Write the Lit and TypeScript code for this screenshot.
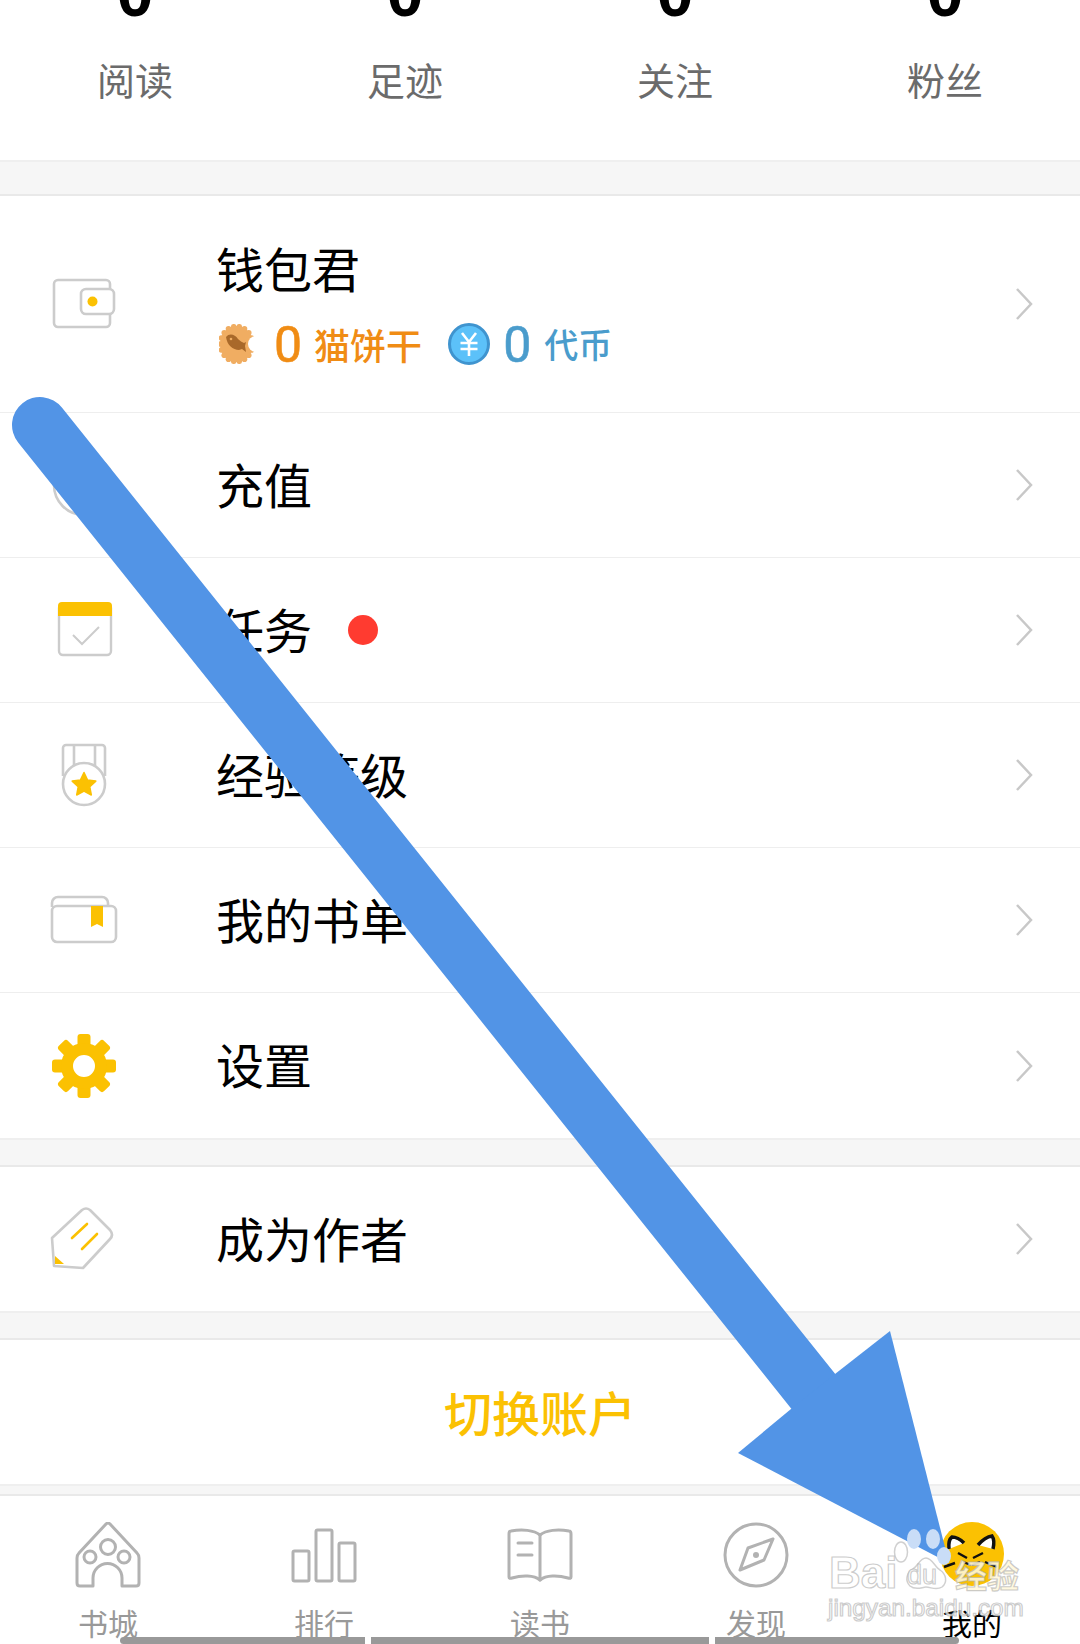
import { html, svg, css, LitElement, nothing } from 'lit';
import { customElement } from 'lit/decorators.js';

const GRAY = '#cccccc';
const YELLOW = '#fbc102';

const stats = ['阅读', '足迹', '关注', '粉丝'];

const walletIcon = html`<svg class="icon" viewBox="0 0 64 64" fill="none" stroke=${GRAY} stroke-width="2.6">
  <rect x="2" y="8" width="56" height="47" rx="4"></rect>
  <rect x="29" y="17" width="33" height="25" rx="5" fill="#fff"></rect>
  <circle cx="40.500" cy="29.500" r="5" fill=${YELLOW} stroke="none"></circle>
</svg>`;

const rechargeIcon = html`<svg class="icon" viewBox="0 0 64 64" fill="none" stroke=${GRAY} stroke-width="2.6">
  <circle cx="32" cy="32" r="30"></circle>
</svg>`;

const taskIcon = html`<svg class="icon" viewBox="0 0 64 64" fill="none" stroke=${GRAY} stroke-width="2.4">
  <rect x="7" y="6" width="52" height="51" rx="4"></rect>
  <path d="M6 18V8a4 4 0 0 1 4-4h46a4 4 0 0 1 4 4v10z" fill=${YELLOW} stroke="none"></path>
  <path d="M21 37l9 9 17-17" stroke-width="2"></path>
</svg>`;

const medalIcon = html`<svg class="icon" viewBox="0 0 64 64" fill="none" stroke=${GRAY} stroke-width="2.6">
  <path d="M11 33V5a3 3 0 0 1 3-3h36a3 3 0 0 1 3 3v28"></path>
  <path d="M22 2v24M43 2v24"></path>
  <circle cx="32" cy="41" r="21" fill="#fff"></circle>
  <path d="M32 29.500l3.600 7.600 8.200 1-6 5.700 1.500 8.200-7.300-4-7.300 4 1.500-8.200-6-5.700 8.200-1z" fill=${YELLOW} stroke=${YELLOW} stroke-width="1.500" stroke-linejoin="round"></path>
</svg>`;

const listIcon = html`<svg class="icon" viewBox="0 0 64 64" fill="none" stroke=${GRAY} stroke-width="2.6">
  <path d="M0 19v-4a6 6 0 0 1 6-6h44a6 6 0 0 1 6 6v3"></path>
  <rect x="0" y="18" width="64" height="36" rx="5" fill="#fff"></rect>
  <path d="M39 18h12v21l-6-3-6 3z" fill=${YELLOW} stroke="none"></path>
</svg>`;

// the gear is drawn with svg`` so the mapped teeth stay in the svg namespace
const gearTeeth = [0, 45, 90, 135, 180, 225, 270, 315].map(
  (a) => svg`<rect x="25.500" y="0" width="13" height="20" rx="3" transform="rotate(${a} 32 32)"></rect>`,
);

const gearIcon = html`<svg class="icon" viewBox="0 0 64 64" fill=${YELLOW}>
  ${gearTeeth}
  <circle cx="32" cy="32" r="17" fill="none" stroke=${YELLOW} stroke-width="12"></circle>
</svg>`;

const authorIcon = html`<svg class="icon" viewBox="0 0 64 64" fill="none" stroke=${GRAY} stroke-width="2.6" stroke-linejoin="round">
  <path d="M0 31L30 3q4-3 8 0l20 20q4 5 0 9L31 61 2 59z"></path>
  <path d="M3 49l9 8H3z" fill=${YELLOW} stroke="none"></path>
  <path d="M20 31l15-14M30 42l15-15" stroke=${YELLOW} stroke-linecap="round"></path>
</svg>`;

const chevron = html`<svg class="chevron" viewBox="0 0 18 34" fill="none" stroke="#c8c8c8" stroke-width="2.500">
  <path d="M2 2l14 15L2 32"></path>
</svg>`;

const scallops = Array.from({ length: 18 }, (_, i) => {
  const a = (i / 18) * Math.PI * 2;
  return svg`<circle cx=${17.500 + Math.cos(a) * 16} cy=${20 + Math.sin(a) * 17.500} r="2.800"></circle>`;
});

const cookie = html`<svg class="coin" viewBox="0 0 40 40">
  <g fill="#f0ad62">
    ${scallops}
    <ellipse cx="17.500" cy="20" rx="16.500" ry="18"></ellipse>
  </g>
  <circle cx="37" cy="20" r="8" fill="#fff"></circle>
  <path d="M7 13c3-4 9-3 12 2 2 2 4 3 6 4l2-1-1 4 1 6-4-3-3 1c-6 0-12-5-13-13z" fill="#a9692a"></path>
  <circle cx="12" cy="15" r="1.300" fill="#f0ad62"></circle>
</svg>`;

const yuan = html`<svg class="coin" viewBox="0 0 42 42">
  <circle cx="21" cy="21" r="19.500" fill="#5cc1f9" stroke="#3f94cf" stroke-width="3"></circle>
  <path d="M14 10l7 9 7-9M12.500 20h17M12.500 26h17M21 19v14" fill="none" stroke="#fff" stroke-width="2.600"></path>
</svg>`;

const houseIcon = html`<svg viewBox="0 0 66 66" fill="none" stroke="#b2b2b2" stroke-width="3" stroke-linejoin="round">
  <path d="M2 36q0-3 2-5L31 2q2-2 4 0l27 29q2 2 2 5v25q0 3-3 3H47v-8a14.500 14.500 0 0 0-29 0v8H5q-3 0-3-3z"></path>
  <circle cx="33" cy="25" r="7.500"></circle>
  <circle cx="15" cy="35" r="6"></circle>
  <circle cx="49" cy="35" r="6"></circle>
</svg>`;

const barsIcon = html`<svg viewBox="0 0 66 66" fill="none" stroke="#b2b2b2" stroke-width="3">
  <rect x="2" y="29" width="16" height="30" rx="1.500"></rect>
  <rect x="25" y="8" width="16" height="51" rx="1.500"></rect>
  <rect x="48" y="21" width="16" height="38" rx="1.500"></rect>
</svg>`;

const bookIcon = html`<svg viewBox="0 0 66 66" fill="none" stroke="#b2b2b2" stroke-width="3" stroke-linejoin="round" stroke-linecap="round">
  <path d="M33 13C27 8 15 7 4 9q-2 0-2 3v43q0 2 3 1c10-3 22-3 28 2 6-5 18-5 28-2q3 1 3-1V12q0-3-2-3C51 7 39 8 33 13z"></path>
  <path d="M33 13v45M11 21h14M11 33h14"></path>
</svg>`;

const compassIcon = html`<svg viewBox="0 0 66 66" fill="none" stroke="#b2b2b2" stroke-width="3" stroke-linejoin="round">
  <circle cx="33" cy="33" r="31"></circle>
  <path d="M50 17L25 26 17 48l24-10z"></path>
  <circle cx="33" cy="33" r="3" fill="#b2b2b2" stroke="none"></circle>
</svg>`;

const catIcon = html`<svg viewBox="0 0 66 66">
  <circle cx="33" cy="32" r="32" fill=${YELLOW}></circle>
  <path d="M10 27l2-12 13 6zM54 27l-1-13-14 9z" fill="#fff"></path>
  <path d="M10 27q-1-9 3-12 6 0 12 6M39 23q7-8 14-9 3 4 1 13" fill="none" stroke="#111" stroke-width="3.500"></path>
  <path d="M19 31l9 5M44 31l-10 5M5 45l11-4M58 45l-12-5M24 40l8 3M41 40l-8 3" fill="none" stroke="#111" stroke-width="2.400"></path>
</svg>`;

const rows = [
  { label: '钱包君', icon: walletIcon, size: 'wallet' },
  { label: '充值', icon: rechargeIcon, size: '' },
  { label: '任务', icon: taskIcon, size: '', dot: true },
  { label: '经验等级', icon: medalIcon, size: '' },
  { label: '我的书单', icon: listIcon, size: '' },
  { label: '设置', icon: gearIcon, size: '' },
];

const tabs = [
  { label: '书城', icon: houseIcon },
  { label: '排行', icon: barsIcon },
  { label: '读书', icon: bookIcon },
  { label: '发现', icon: compassIcon },
  { label: '我的', icon: catIcon, active: true },
];

@customElement('app-root')
export class AppRoot extends LitElement {
  static styles = css`
    :host {
      display: block;
      position: relative;
      width: 1080px;
      height: 1644px;
      overflow: hidden;
      background: #fff;
      font-family: "Noto Sans CJK SC", "Liberation Sans", sans-serif;
      color: #000;
    }

    .stats {
      display: grid;
      grid-template-columns: repeat(4, 270px);
      height: 160px;
      overflow: hidden;
      text-align: center;
    }
    .stat-num {
      margin-top: -37px;
      height: 60px;
      font: 700 66px/60px "Liberation Sans", sans-serif;
    }
    .stat-label {
      margin-top: 33px;
      font-size: 38px;
      line-height: 46px;
      color: #6b6b6b;
    }

    .band {
      background: #f6f6f6;
      border-top: 2px solid #efefef;
      border-bottom: 2px solid #e9e9e9;
      box-sizing: border-box;
    }
    .band.big { height: 36px; }
    .band.mid { height: 29px; }
    .band.low { height: 12px; }

    .row {
      display: flex;
      align-items: center;
      box-sizing: border-box;
      height: 145px;
      padding: 0 47px 0 52px;
      border-bottom: 1px solid #eeeeee;
    }
    .row.wallet { height: 217px; }
    .row.short { height: 144px; }
    .row.last { border-bottom: none; }

    .icon {
      flex: none;
      width: 64px;
      height: 64px;
      margin-right: 100px;
      overflow: visible;
    }
    .chevron {
      flex: none;
      width: 18px;
      height: 34px;
      margin-left: auto;
    }
    .label {
      font-size: 48px;
      line-height: 60px;
      padding-bottom: 5px;
    }
    .dot {
      width: 30px;
      height: 30px;
      margin-left: 36px;
      border-radius: 50%;
      background: #ff3b30;
    }

    .wallet-text {
      display: flex;
      flex-direction: column;
      gap: 22px;
      margin-top: -8px;
    }
    .coins {
      display: flex;
      align-items: center;
      height: 40px;
    }
    .coin {
      flex: none;
      width: 40px;
      height: 40px;
    }
    .coin-num {
      font: 400 50px/40px Roboto, "Liberation Sans", sans-serif;
      -webkit-text-stroke: 0.6px currentColor;
      padding-top: 3px;
    }
    .coin-name {
      font-weight: 500;
      line-height: 40px;
    }
    .biscuit { color: #f08c14; }
    .biscuit .coin { margin-left: 3px; }
    .biscuit .coin-num { margin: 0 12px 0 15px; }
    .biscuit .coin-name { font-size: 36px; }
    .token { color: #4a9ccc; margin-left: 26px; }
    .token .coin { width: 42px; height: 42px; }
    .token .coin-num { margin: 0 13px; }
    .token .coin-name { font-size: 34px; }
    .group { display: flex; align-items: center; }

    .switch {
      height: 144px;
      font-size: 48px;
      font-weight: 500;
      line-height: 142px;
      text-align: center;
      color: #fbc102;
    }

    .tabbar {
      display: grid;
      grid-template-columns: repeat(5, 216px);
      height: 148px;
      overflow: hidden;
    }
    .tab {
      display: flex;
      flex-direction: column;
      align-items: center;
      padding-top: 26px;
      font-size: 30px;
      line-height: 30px;
      color: #999;
    }
    .tab svg {
      width: 66px;
      height: 66px;
      margin-bottom: 19px;
    }
    .tab.active { color: #000; }

    .home-bars {
      position: absolute;
      left: 120px;
      bottom: 0;
      display: flex;
      gap: 6px;
    }
    .home-bars span {
      height: 7px;
      background: #999;
    }
    .home-bars .a { width: 245px; border-radius: 4px 0 0 4px; }
    .home-bars .b { width: 338px; }
    .home-bars .c { width: 244px; border-radius: 0 4px 4px 0; }

    .arrow {
      position: absolute;
      inset: 0;
      width: 1080px;
      height: 1644px;
    }

    .mark {
      position: absolute;
      color: rgba(255, 255, 255, 0.72);
      -webkit-text-stroke: 1.2px rgba(170, 170, 170, 0.6);
      font-family: "Liberation Sans", sans-serif;
      white-space: nowrap;
    }
    .mark.bai { left: 829px; top: 1548px; font-size: 44px; line-height: 50px; font-weight: 700; }
    .mark.du { left: 907px; top: 1560px; font-size: 27px; line-height: 30px; }
    .mark.jy {
      left: 955px; top: 1554px; font-size: 32px; line-height: 40px; font-weight: 700;
      font-family: "Noto Sans CJK SC", sans-serif;
      color: rgba(255, 248, 220, 0.9);
    }
    .mark.url { left: 828px; top: 1594px; font-size: 24.300px; line-height: 28px; }
  `;

  renderRow(row: typeof rows[number], last = false) {
    return html`<div class="row ${row.size} ${last ? 'last' : ''}">
      ${row.icon}
      ${row.size === 'wallet' ? html`<div class="wallet-text">
        <div class="label">${row.label}</div>
        <div class="coins">
          <div class="group biscuit">${cookie}<span class="coin-num">0</span><span class="coin-name">猫饼干</span></div>
          <div class="group token">${yuan}<span class="coin-num">0</span><span class="coin-name">代币</span></div>
        </div>
      </div>` : html`<div class="label">${row.label}</div>`}
      ${row.dot ? html`<div class="dot"></div>` : nothing}
      ${chevron}
    </div>`;
  }

  render() {
    return html`
      <div class="stats">
        ${stats.map((s) => html`<div><div class="stat-num">0</div><div class="stat-label">${s}</div></div>`)}
      </div>
      <div class="band big"></div>
      ${rows.map((r, i) => this.renderRow(r, i === rows.length - 1))}
      <div class="band mid"></div>
      ${this.renderRow({ label: '成为作者', icon: authorIcon, size: 'short' }, true)}
      <div class="band mid"></div>
      <div class="switch">切换账户</div>
      <div class="band low"></div>
      <div class="tabbar">
        ${tabs.map((t) => html`<div class="tab ${t.active ? 'active' : ''}">${t.icon}<span>${t.label}</span></div>`)}
      </div>
      <div class="home-bars"><span class="a"></span><span class="b"></span><span class="c"></span></div>

      <svg class="arrow" viewBox="0 0 1080 1644">
        <path d="M40 425L813 1391" stroke="#5294e6" stroke-width="56" stroke-linecap="round" fill="none"></path>
        <path d="M890 1331L949 1563 738 1453 791 1409 835 1374z" fill="#5294e6"></path>
        <g fill="#c9ddf7">
          <ellipse cx="914" cy="1539" rx="7" ry="10"></ellipse>
          <ellipse cx="933" cy="1539" rx="7" ry="10"></ellipse>
          <ellipse cx="944" cy="1556" rx="7" ry="9"></ellipse>
        </g>
        <g fill="none" stroke="rgba(170,170,170,.55)" stroke-width="1.500">
          <ellipse cx="901" cy="1552" rx="6.500" ry="10"></ellipse>
          <path d="M926 1558c-6 0-8 8-13 11-7 4-8 12-3 17 6 5 12 1 16 1 5 0 10 4 16 0 6-5 4-13-2-17-5-3-8-12-14-12z"></path>
        </g>
      </svg>
      <span class="mark bai">Bai</span>
      <span class="mark du">du</span>
      <span class="mark jy">经验</span>
      <span class="mark url">jingyan.baidu.com</span>
    `;
  }
}
